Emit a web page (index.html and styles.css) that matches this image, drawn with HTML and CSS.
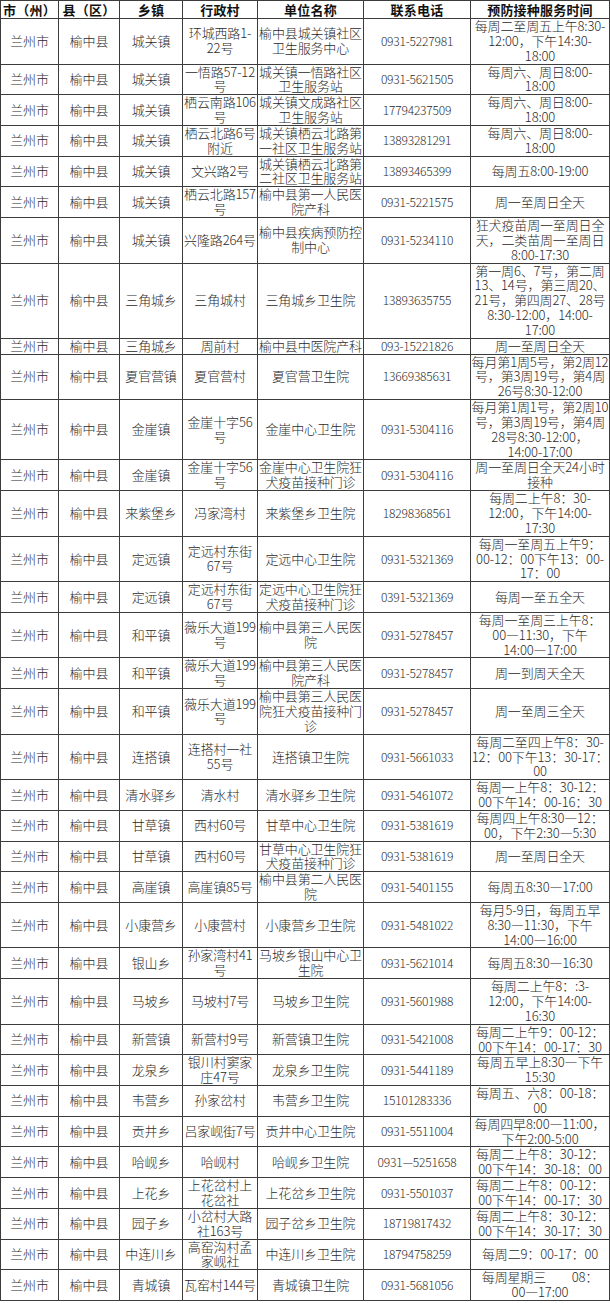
FILE: index.html
```html
<!DOCTYPE html>
<html lang="zh-CN">
<head>
<meta charset="utf-8">
<title>榆中县预防接种门诊</title>
<link rel="stylesheet" href="styles.css">
</head>
<body>
<table class="grid">
<colgroup>
<col class="c-city"><col class="c-county"><col class="c-town"><col class="c-village"><col class="c-unit"><col class="c-tel"><col class="c-time">
</colgroup>
<thead>
<tr><th>市（州）</th><th>县（区）</th><th>乡镇</th><th>行政村</th><th>单位名称</th><th>联系电话</th><th>预防接种服务时间</th></tr>
</thead>
<tbody>
<tr><td>兰州市</td><td>榆中县</td><td>城关镇</td><td>环城西路1-<br>22号</td><td>榆中县城关镇社区<br>卫生服务中心</td><td class="tel">0931-5227981</td><td>每周二至周五上午8:30-<br>12:00，下午14:30-<br>18:00</td></tr>
<tr><td>兰州市</td><td>榆中县</td><td>城关镇</td><td>一悟路57-12<br>号</td><td>城关镇一悟路社区<br>卫生服务站</td><td class="tel">0931-5621505</td><td>每周六、周日8:00-<br>18:00</td></tr>
<tr><td>兰州市</td><td>榆中县</td><td>城关镇</td><td>栖云南路106<br>号</td><td>城关镇文成路社区<br>卫生服务站</td><td class="tel">17794237509</td><td>每周六、周日8:00-<br>18:00</td></tr>
<tr><td>兰州市</td><td>榆中县</td><td>城关镇</td><td>栖云北路6号<br>附近</td><td>城关镇栖云北路第<br>一社区卫生服务站</td><td class="tel">13893281291</td><td>每周六、周日8:00-<br>18:00</td></tr>
<tr><td>兰州市</td><td>榆中县</td><td>城关镇</td><td>文兴路2号</td><td>城关镇栖云北路第<br>二社区卫生服务站</td><td class="tel">13893465399</td><td>每周五8:00-19:00</td></tr>
<tr><td>兰州市</td><td>榆中县</td><td>城关镇</td><td>栖云北路157<br>号</td><td>榆中县第一人民医<br>院产科</td><td class="tel">0931-5221575</td><td>周一至周日全天</td></tr>
<tr><td>兰州市</td><td>榆中县</td><td>城关镇</td><td>兴隆路264号</td><td>榆中县疾病预防控<br>制中心</td><td class="tel">0931-5234110</td><td>狂犬疫苗周一至周日全<br>天，二类苗周一至周日<br>8:00-17:30</td></tr>
<tr><td>兰州市</td><td>榆中县</td><td>三角城乡</td><td>三角城村</td><td>三角城乡卫生院</td><td class="tel">13893635755</td><td>第一周6、7号，第二周<br>13、14号，第三周20、<br>21号，第四周27、28号<br>8:30-12:00，14:00-<br>17:00</td></tr>
<tr><td>兰州市</td><td>榆中县</td><td>三角城乡</td><td>周前村</td><td>榆中县中医院产科</td><td class="tel">093-15221826</td><td>周一至周日全天</td></tr>
<tr><td>兰州市</td><td>榆中县</td><td>夏官营镇</td><td>夏官营村</td><td>夏官营卫生院</td><td class="tel">13669385631</td><td>每月第1周5号，第2周12<br>号，第3周19号，第4周<br>26号8:30-12:00</td></tr>
<tr><td>兰州市</td><td>榆中县</td><td>金崖镇</td><td>金崖十字56<br>号</td><td>金崖中心卫生院</td><td class="tel">0931-5304116</td><td>每月第1周1号，第2周10<br>号，第3周19号，第4周<br>28号8:30-12:00，<br>14:00-17:00</td></tr>
<tr><td>兰州市</td><td>榆中县</td><td>金崖镇</td><td>金崖十字56<br>号</td><td>金崖中心卫生院狂<br>犬疫苗接种门诊</td><td class="tel">0931-5304116</td><td>周一至周日全天24小时<br>接种</td></tr>
<tr><td>兰州市</td><td>榆中县</td><td>来紫堡乡</td><td>冯家湾村</td><td>来紫堡乡卫生院</td><td class="tel">18298368561</td><td>每周二上午8：30-<br>12:00，下午14:00-<br>17:30</td></tr>
<tr><td>兰州市</td><td>榆中县</td><td>定远镇</td><td>定远村东街<br>67号</td><td>定远中心卫生院</td><td class="tel">0931-5321369</td><td>每周一至周五上午9：<br>00-12：00下午13：00-<br>17：00</td></tr>
<tr><td>兰州市</td><td>榆中县</td><td>定远镇</td><td>定远村东街<br>67号</td><td>定远中心卫生院狂<br>犬疫苗接种门诊</td><td class="tel">0391-5321369</td><td>每周一至五全天</td></tr>
<tr><td>兰州市</td><td>榆中县</td><td>和平镇</td><td>薇乐大道199<br>号</td><td>榆中县第三人民医<br>院</td><td class="tel">0931-5278457</td><td>每周一至周三上午8：<br>00—11:30，下午<br>14:00—17:00</td></tr>
<tr><td>兰州市</td><td>榆中县</td><td>和平镇</td><td>薇乐大道199<br>号</td><td>榆中县第三人民医<br>院产科</td><td class="tel">0931-5278457</td><td>周一到周天全天</td></tr>
<tr><td>兰州市</td><td>榆中县</td><td>和平镇</td><td>薇乐大道199<br>号</td><td>榆中县第三人民医<br>院狂犬疫苗接种门<br>诊</td><td class="tel">0931-5278457</td><td>周一至周三全天</td></tr>
<tr><td>兰州市</td><td>榆中县</td><td>连搭镇</td><td>连搭村一社<br>55号</td><td>连搭镇卫生院</td><td class="tel">0931-5661033</td><td>每周二至四上午8：30-<br>12：00下午13：30-17：<br>00</td></tr>
<tr><td>兰州市</td><td>榆中县</td><td>清水驿乡</td><td>清水村</td><td>清水驿乡卫生院</td><td class="tel">0931-5461072</td><td>每周一上午8：30-12：<br>00下午14：00-16：30</td></tr>
<tr><td>兰州市</td><td>榆中县</td><td>甘草镇</td><td>西村60号</td><td>甘草中心卫生院</td><td class="tel">0931-5381619</td><td>每周四上午8:30—12：<br>00，下午2:30—5:30</td></tr>
<tr><td>兰州市</td><td>榆中县</td><td>甘草镇</td><td>西村60号</td><td>甘草中心卫生院狂<br>犬疫苗接种门诊</td><td class="tel">0931-5381619</td><td>周一至周日全天</td></tr>
<tr><td>兰州市</td><td>榆中县</td><td>高崖镇</td><td>高崖镇85号</td><td>榆中县第二人民医<br>院</td><td class="tel">0931-5401155</td><td>每周五8:30—17:00</td></tr>
<tr><td>兰州市</td><td>榆中县</td><td>小康营乡</td><td>小康营村</td><td>小康营乡卫生院</td><td class="tel">0931-5481022</td><td>每月5-9日，每周五早<br>8:30—11:30，下午<br>14:00—16:00</td></tr>
<tr><td>兰州市</td><td>榆中县</td><td>银山乡</td><td>孙家湾村41<br>号</td><td>马坡乡银山中心卫<br>生院</td><td class="tel">0931-5621014</td><td>每周五8:30—16:30</td></tr>
<tr><td>兰州市</td><td>榆中县</td><td>马坡乡</td><td>马坡村7号</td><td>马坡乡卫生院</td><td class="tel">0931-5601988</td><td>每周二上午8：:3-<br>12:00，下午14:00-<br>16:30</td></tr>
<tr><td>兰州市</td><td>榆中县</td><td>新营镇</td><td>新营村9号</td><td>新营镇卫生院</td><td class="tel">0931-5421008</td><td>每周二上午9：00-12：<br>00下午14：00-17：30</td></tr>
<tr><td>兰州市</td><td>榆中县</td><td>龙泉乡</td><td>银川村窦家<br>庄47号</td><td>龙泉乡卫生院</td><td class="tel">0931-5441189</td><td>每周五早上8:30—下午<br>15:30</td></tr>
<tr><td>兰州市</td><td>榆中县</td><td>韦营乡</td><td>孙家岔村</td><td>韦营乡卫生院</td><td class="tel">15101283336</td><td>每周五、六8：00-18：<br>00</td></tr>
<tr><td>兰州市</td><td>榆中县</td><td>贡井乡</td><td>吕家岘街7号</td><td>贡井中心卫生院</td><td class="tel">0931-5511004</td><td>每周四早8:00—11:00，<br>下午2:00-5:00</td></tr>
<tr><td>兰州市</td><td>榆中县</td><td>哈岘乡</td><td>哈岘村</td><td>哈岘乡卫生院</td><td class="tel">0931—5251658</td><td>每周二上午8：30-12：<br>00下午14：30-18：00</td></tr>
<tr><td>兰州市</td><td>榆中县</td><td>上花乡</td><td>上花岔村上<br>花岔社</td><td>上花岔乡卫生院</td><td class="tel">0931-5501037</td><td>每周二上午8：00-12：<br>00下午14：00-17：30</td></tr>
<tr><td>兰州市</td><td>榆中县</td><td>园子乡</td><td>小岔村大路<br>社163号</td><td>园子岔乡卫生院</td><td class="tel">18719817432</td><td>每周二上午8：30-12：<br>00下午14：30-17：30</td></tr>
<tr><td>兰州市</td><td>榆中县</td><td>中连川乡</td><td>高窑沟村孟<br>家岘社</td><td>中连川乡卫生院</td><td class="tel">18794758259</td><td>每周二9：00-17：00</td></tr>
<tr><td>兰州市</td><td>榆中县</td><td>青城镇</td><td>瓦窑村144号</td><td>青城镇卫生院</td><td class="tel">0931-5681056</td><td>每周星期三　　08：<br>00—17:00</td></tr>
</tbody>
</table>
</body>
</html>
```

FILE: styles.css
```css
html, body {
  margin: 0;
  padding: 0;
  background: #ffffff;
}

.grid {
  border-collapse: collapse;
  table-layout: fixed;
  width: 609px;
  font-family: "Noto Sans CJK SC", "Liberation Sans", sans-serif;
  color: #2a2a2a;
}

.c-city { width: 58px; }
.c-county { width: 61px; }
.c-town { width: 63px; }
.c-village { width: 75px; }
.c-unit { width: 106px; }
.c-tel { width: 107px; }
.c-time { width: 139px; }

.grid th,
.grid td {
  border: 1px solid #3c3c3c;
  padding: 0;
  text-align: center;
  vertical-align: middle;
  white-space: nowrap;
  overflow: visible;
}

.grid th {
  font-size: 13px;
  font-weight: 700;
  line-height: 17px;
  color: #111;
  letter-spacing: 0.2px;
}

.grid td {
  font-size: 13px;
  font-weight: 300;
  line-height: 14.85px;
  letter-spacing: -0.15px;
}

.grid td.tel {
  font-size: 12px;
  letter-spacing: -0.2px;
}
```
